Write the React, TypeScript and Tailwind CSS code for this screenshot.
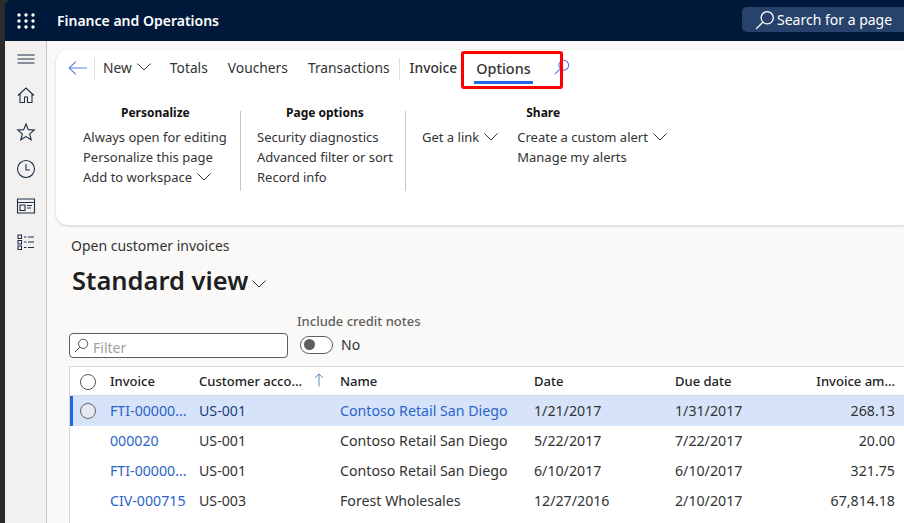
import React from 'react';

const font = { fontFamily: '"Noto Sans", sans-serif' };

const rows = [
  { invoice: 'FTI-00000...', account: 'US-001', name: 'Contoso Retail San Diego', date: '1/21/2017', due: '1/31/2017', amount: '268.13', selected: true },
  { invoice: '000020', account: 'US-001', name: 'Contoso Retail San Diego', date: '5/22/2017', due: '7/22/2017', amount: '20.00' },
  { invoice: 'FTI-00000...', account: 'US-001', name: 'Contoso Retail San Diego', date: '6/10/2017', due: '6/10/2017', amount: '321.75' },
  { invoice: 'CIV-000715', account: 'US-003', name: 'Forest Wholesales', date: '12/27/2016', due: '2/10/2017', amount: '67,814.18' },
];

const Magnifier = ({ className }: { className: string }) => (
  <svg viewBox="0 0 18 18" fill="none" stroke="currentColor" strokeWidth="1.2" className={className}>
    <circle cx="11" cy="7" r="5.5" />
    <path d="M7 11 L1 17" />
  </svg>
);

const Chevron = ({ className }: { className: string }) => (
  <svg viewBox="0 0 14 8" fill="none" stroke="#333" strokeWidth="1" className={`w-[14px] h-[8px] shrink-0 ${className}`}>
    <path d="M0.500 0.500 7 7l6.500-6.500" />
  </svg>
);

const Waffle = () => (
  <svg viewBox="0 0 18 16" className="w-[18px] h-[16px]" fill="white">
    {[2, 9, 16].map((x) => [2, 8, 14].map((y) => <circle key={`${x}-${y}`} cx={x} cy={y} r="1.7" />))}
  </svg>
);

const RailIcon = ({ children, className }: { children: React.ReactNode; className: string }) => (
  <div className={`flex items-center justify-center ${className}`}>
    <svg viewBox="0 0 20 20" fill="none" stroke="#1c2f4a" strokeWidth="1.1" className="w-[20px] h-[20px]">
      {children}
    </svg>
  </div>
);

const Link = ({ children, chevron }: { children: React.ReactNode; chevron?: boolean }) => (
  <div className="h-[20px] flex items-center gap-[5px] whitespace-nowrap text-[13px] text-[#333]">
    {children}
    {chevron && <Chevron className="mb-[3px]" />}
  </div>
);

const Heading = ({ children, className }: { children: React.ReactNode; className: string }) => (
  <div className={`h-[20px] flex items-center text-[12px] font-bold text-[#111] whitespace-nowrap ${className}`}>{children}</div>
);

const Tab = ({ children, className }: { children: React.ReactNode; className: string }) => (
  <div className={`text-[13.8px] text-[#333] whitespace-nowrap ${className}`}>{children}</div>
);

const Separator = () => <div className="w-px h-[80px] mt-[8px] shrink-0 bg-[#c8c6c4]" />;

const Cols = 'grid grid-cols-[40px_89px_141px_194px_141px_100px_1fr] items-center';

export default function App() {
  return (
    <div className="flex w-[904px] h-[523px] overflow-hidden bg-[#2b2b2b]" style={font}>
      <div className="w-[5px] shrink-0" />
      <div className="flex-1 flex flex-col min-w-0 rounded-tl-[6px] overflow-hidden">
        {/* Top bar */}
        <header className="h-[41px] shrink-0 bg-[#00183a] flex items-center pl-[12px]">
          <Waffle />
          <span className="ml-[22px] text-[14px] font-semibold text-white whitespace-nowrap">Finance and Operations</span>
          <div className="ml-auto w-[162px] h-[25px] mb-[2px] bg-[#28436b] rounded-l-[5px] flex items-center pl-[13px] gap-[2px] text-white">
            <Magnifier className="w-[20px] h-[20px]" />
            <span className="text-[14px] whitespace-nowrap">Search for a page</span>
          </div>
        </header>

        <div className="flex-1 flex min-h-0">
          {/* Nav rail */}
          <nav className="w-[42px] shrink-0 bg-[#f2f1ef] border-r border-[#c8c6c4]">
            <RailIcon className="h-[35px]">
              <path d="M1.5 6h17M1.5 10h17M1.5 14h17" />
            </RailIcon>
            <RailIcon className="h-[37px]">
              <path d="M2 10.5 10 3l8 7.5M4 9v8.5h4.5V12h3v5.5H16V9" />
            </RailIcon>
            <RailIcon className="h-[37px]">
              <path d="M10 2l2.3 5.6 6 .4-4.6 3.9 1.5 5.9-5.2-3.2-5.2 3.2 1.5-5.9L1.7 8l6-.4z" />
            </RailIcon>
            <RailIcon className="h-[37px]">
              <circle cx="10" cy="10" r="8.5" />
              <path d="M10 5v6h4" />
            </RailIcon>
            <RailIcon className="h-[37px]">
              <path d="M1.5 3h17v14h-17zM1.5 6.5h17" />
              <path d="M4 9h5v5.5H4zM11 9.5h5M11 12h4" />
            </RailIcon>
            <RailIcon className="h-[36px]">
              <path d="M2 3h3.5v3.5H2zM2 8.5h3.5V12H2zM2 14h3.5v3.5H2zM8 5h2.500M12 5h6M8 10h2.500M12 10h6M8 15.500h2.500M12 15.500h6" />
            </RailIcon>
          </nav>

          {/* Content */}
          <main className="flex-1 min-w-0 bg-[#faf9f8] flex flex-col">
            <section className="relative ml-[9px] mt-[9px] h-[175px] bg-white rounded-l-[12px] shadow-[0_1px_3px_rgba(0,0,0,0.18)] shrink-0">
              <div className="flex items-center h-[36px] pt-[1px] pl-[12px]">
                <svg viewBox="0 0 18 14" fill="none" stroke="#5b7fe0" strokeWidth="1" className="w-[19px] h-[16px] mb-[2px] shrink-0">
                  <path d="M7.500 1 1 7l6.500 6M1 7h17" />
                </svg>
                <div className="ml-[7px] w-px h-[22px] bg-[#e1dfdd]" />
                <Tab className="ml-[8px]">New</Tab>
                <Chevron className="ml-[5px] mb-[3px]" />
                <Tab className="ml-[19px]">Totals</Tab>
                <Tab className="ml-[20px]">Vouchers</Tab>
                <Tab className="ml-[20px]">Transactions</Tab>
                <div className="ml-[9px] w-px h-[22px] bg-[#e1dfdd]" />
                <Tab className="ml-[10px] font-medium text-[#222]">Invoice</Tab>
                <div className="ml-[19px] relative">
                  <Tab className="font-medium text-[#111] text-[14.4px]">Options</Tab>
                  <div className="absolute left-[-2px] right-[-2px] top-[23px] h-[3px] bg-[#2266e3]" />
                </div>
                <Magnifier className="ml-[23px] mb-[4px] w-[16px] h-[16px] text-[#5b6fe0]" />
              </div>

              {/* Ribbon groups */}
              <div className="flex mt-[17px] h-[90px]">
                <div className="w-[184px] pl-[27px]">
                  <Heading className="pl-[38px] mb-[5px]">Personalize</Heading>
                  <Link>Always open for editing</Link>
                  <Link>Personalize this page</Link>
                  <Link chevron>Add to workspace</Link>
                </div>
                <Separator />
                <div className="w-[164px] pl-[16px]">
                  <Heading className="pl-[29px] mb-[5px]">Page options</Heading>
                  <Link>Security diagnostics</Link>
                  <Link>Advanced filter or sort</Link>
                  <Link>Record info</Link>
                </div>
                <Separator />
                <div className="pl-[16px] flex">
                  <div className="pt-[25px]">
                    <Link chevron>Get a link</Link>
                  </div>
                  <div className="ml-[19px]">
                    <Heading className="pl-[9px] mb-[5px]">Share</Heading>
                    <Link chevron>Create a custom alert</Link>
                    <Link>Manage my alerts</Link>
                  </div>
                </div>
              </div>

              {/* Highlight drawn over the ribbon */}
              <div className="absolute left-[405px] top-[1px] w-[102px] h-[38px] border-[3px] border-[#ff0000] rounded-[3px]" />
            </section>

            <div className="ml-[24px] mt-[12px] text-[14px] leading-[18px] text-[#333] whitespace-nowrap">Open customer invoices</div>
            <div className="ml-[25px] mt-[7px] flex items-center h-[36px]">
              <span className="text-[25.500px] font-semibold text-[#1f1f1f] whitespace-nowrap">Standard view</span>
              <Chevron className="ml-[4px] mt-[8px]" />
            </div>

            {/* Filter row */}
            <div className="ml-[22px] mt-[15px] flex items-start h-[45px]">
              <div className="w-[219px] h-[25px] mt-[20px] bg-white border border-[#605e5c] rounded-[4px] flex items-center pl-[4px] gap-[4px]">
                <Magnifier className="w-[15px] h-[15px] text-[#555]" />
                <span className="text-[14px] text-[#a19f9d] mt-[3px]">Filter</span>
              </div>
              <div className="ml-[9px]">
                <div className="text-[13px] leading-[16px] font-medium text-[#605e5c] whitespace-nowrap">Include credit notes</div>
                <div className="mt-[5px] ml-[3px] flex items-center gap-[8px]">
                  <div className="w-[33px] h-[18px] border border-[#605e5c] rounded-full bg-white flex items-center pl-[3px]">
                    <div className="w-[11px] h-[11px] rounded-full bg-[#605e5c]" />
                  </div>
                  <span className="text-[14px] text-[#333]">No</span>
                </div>
              </div>
            </div>

            {/* Grid */}
            <div className="ml-[22px] mt-[8px] flex-1 bg-white border-l border-t border-[#d9d7d5] overflow-hidden">
              <div className={`${Cols} h-[29px] pt-[2px] border-b border-[#d9d7d5] text-[13px] font-medium text-[#222] whitespace-nowrap`}>
                <div className="pl-[10px]">
                  <div className="w-[16px] h-[16px] rounded-full border border-[#555]" />
                </div>
                <div>Invoice</div>
                <div className="flex items-center">
                  Customer acco...
                  <svg viewBox="0 0 10 14" fill="none" stroke="#5a8ac6" strokeWidth="1" className="ml-[12px] mb-[5px] w-[10px] h-[14px]">
                    <path d="M5 13.500V1M1 5l4-4 4 4" />
                  </svg>
                </div>
                <div>Name</div>
                <div>Date</div>
                <div>Due date</div>
                <div className="text-right pr-[9px]">Invoice am...</div>
              </div>
              {rows.map((r, i) => (
                <div key={i} className={`${Cols} relative h-[30px] text-[14.2px] whitespace-nowrap ${r.selected ? 'bg-[#d6e3f9]' : ''}`}>
                  {r.selected && <div className="absolute left-0 top-0 bottom-0 w-[3px] bg-[#2266e3]" />}
                  <div className="pl-[10px]">
                    {r.selected && <div className="w-[16px] h-[16px] rounded-full border border-[#666] bg-[#e4e9f2]" />}
                  </div>
                  <div className="text-[#2b63c9]">{r.invoice}</div>
                  <div className={r.selected ? 'text-[#1f3f80]' : 'text-[#333]'}>{r.account}</div>
                  <div className={r.selected ? 'text-[#2b63c9]' : 'text-[#333]'}>{r.name}</div>
                  <div className="text-[#333]">{r.date}</div>
                  <div className="text-[#333]">{r.due}</div>
                  <div className="text-right pr-[9px] text-[#333]">{r.amount}</div>
                </div>
              ))}
            </div>
          </main>
        </div>
      </div>
    </div>
  );
}
